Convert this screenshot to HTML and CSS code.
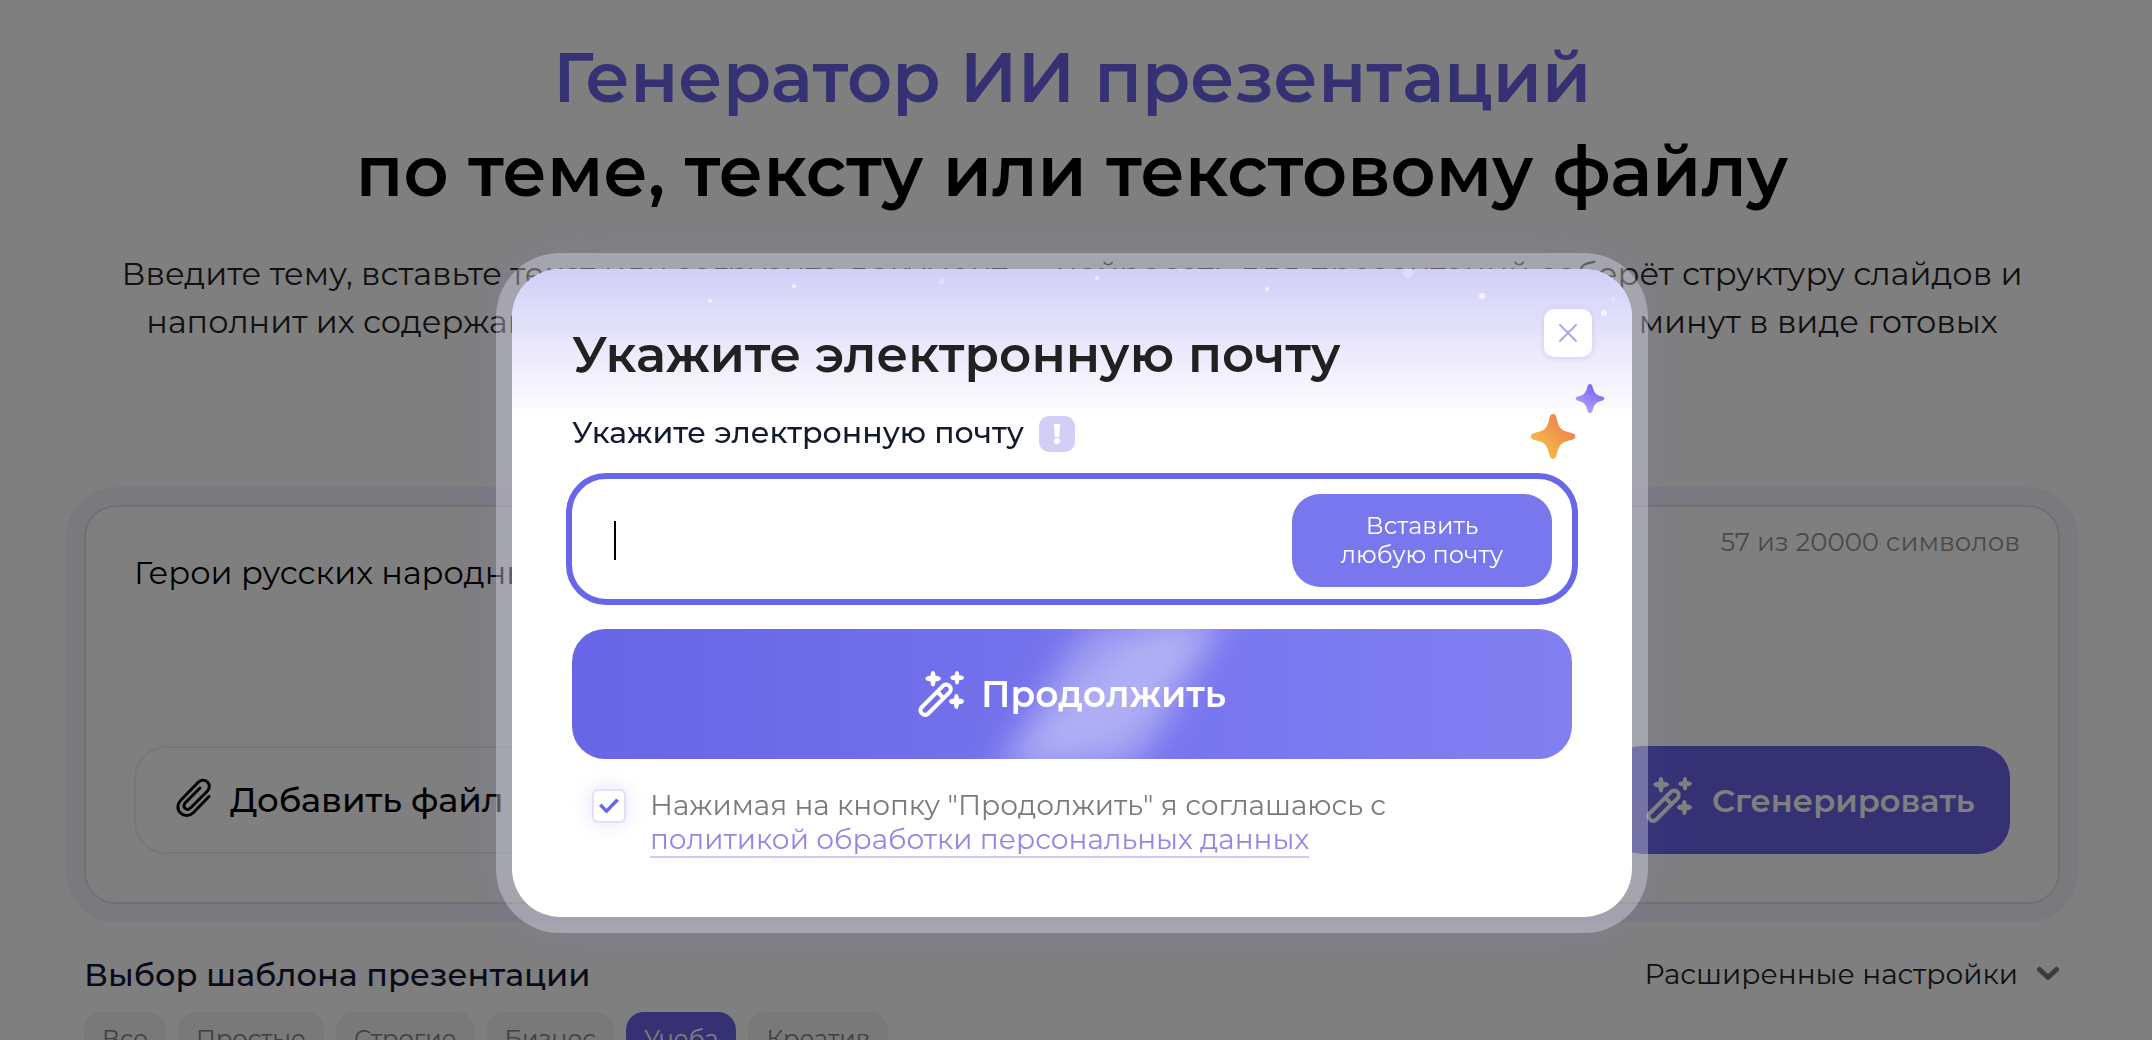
FILE: index.html
```html
<!DOCTYPE html>
<html lang="ru">
<head>
<meta charset="utf-8">
<title>Генератор ИИ презентаций</title>
<meta name="viewport" content="width=device-width, initial-scale=1">
<link rel="stylesheet" href="styles.css">
</head>

<body>
	<svg class="sprite" aria-hidden="true">
		<symbol id="wand" viewBox="0 0 46 46">
			<g fill="none" stroke="currentColor" stroke-width="4" stroke-linejoin="round" stroke-linecap="round">
				<path d="M3.500 36.500 25 14.800a4.600 4.600 0 0 1 6.500 6.500L9.800 43a4.600 4.600 0 0 1-6.300-6.500z"/>
				<path d="M19.500 21l5.500 5.500"/>
			</g>
			<g fill="currentColor">
				<path d="M15 0c1.500 0 2.300 1.400 2.500 4.800C20.900 5 23 6 23 7.600s-2.100 2.600-5.500 2.800C17.300 13.800 16.500 15.400 15 15.400s-2.300-1.600-2.500-5C9.100 10.200 7.400 9.200 7.400 7.600s1.700-2.600 5.100-2.800C12.700 1.400 13.500 0 15 0z"/>
				<path d="M39 0c1.300 0 2 1.300 2.200 4.200C44.200 4.400 46 5.300 46 6.700s-1.800 2.300-4.800 2.500C41 12.100 40.300 13.400 39 13.400s-2-1.300-2.200-4.200c-3-.2-4.400-1.100-4.400-2.500s1.400-2.300 4.400-2.500C37 1.300 37.700 0 39 0z"/>
				<path d="M38.400 23c1.500 0 2.200 1.400 2.400 4.600 3.200.2 5.200 1.200 5.200 2.800s-2 2.600-5.200 2.800C40.600 36.400 39.900 38 38.400 38s-2.200-1.600-2.400-4.800c-3.200-.2-5-1.200-5-2.800s1.800-2.600 5-2.800C36.200 24.400 36.900 23 38.400 23z"/>
			</g>
		</symbol>
	</svg>

	<main class="page">
		<h1 class="title"><span>Генератор ИИ презентаций</span><br>по теме, тексту или текстовому файлу</h1>
		<p class="lead">Введите тему, вставьте текст или загрузите документ — нейросеть для презентаций соберёт структуру слайдов и наполнит их содержанием. Получить готовую презентацию можно уже через несколько минут в виде готовых файлов PPTX и PDF</p>

		<form class="generator">
			<div class="generator-top">
				<textarea class="topic" aria-label="Тема презентации">Герои русских народных сказок и их роль в культуре России</textarea>
				<span class="counter">57 из 20000 символов</span>
			</div>
			<div class="generator-actions">
				<button type="button" class="btn-file">
					<svg width="36" height="42" viewBox="0 0 36 42" fill="none" stroke="currentColor" stroke-width="3" stroke-linecap="round" stroke-linejoin="round"><path d="M33 20.500 17.500 36.500c-4 4-9.500 4-13 .5s-3.500-9 .5-13L22 6.500c3-3 7-3 9.500-.5s2.500 6.500-.5 9.500L14.500 32c-1.800 1.800-4 1.800-5.500.3s-1.500-3.700.3-5.500L24 12"/></svg>
					Добавить файл
				</button>
				<button type="button" class="btn-generate">
					<svg width="46" height="46"><use href="#wand"/></svg>
					Сгенерировать
				</button>
			</div>
		</form>

		<div class="templates-head">
			<h2>Выбор шаблона презентации</h2>
			<button type="button" class="advanced">Расширенные настройки
				<svg width="24" height="16" viewBox="0 0 24 16" fill="none" stroke="#7a7a7a" stroke-width="5" stroke-linecap="round" stroke-linejoin="round"><path d="M3.500 3.500 12 11.500l8.500-8"/></svg>
			</button>
		</div>
		<div class="chips">
			<button type="button">Все</button>
			<button type="button">Простые</button>
			<button type="button">Строгие</button>
			<button type="button">Бизнес</button>
			<button type="button" class="active">Учеба</button>
			<button type="button">Креатив</button>
		</div>
	</main>

	<div class="overlay">
		<section class="modal" role="dialog" aria-labelledby="modal-title">
			<svg class="dots" width="1120" height="150" fill="#fff" aria-hidden="true">
				<g opacity=".7">
					<circle cx="198" cy="32" r="2"/><circle cx="282" cy="17" r="2"/><circle cx="585" cy="9" r="2"/>
					<circle cx="755" cy="20" r="2"/><circle cx="970" cy="27" r="3"/><circle cx="1092" cy="44" r="3"/>
				</g>
				<g opacity=".3">
					<circle cx="430" cy="12" r="3"/><circle cx="669" cy="-1" r="3"/><circle cx="896" cy="4" r="5"/><circle cx="1101" cy="30" r="2"/>
				</g>
			</svg>
			<svg class="stars" width="74" height="76" viewBox="0 0 74 76" aria-hidden="true">
				<defs>
					<linearGradient id="violet" x1=".7" y1=".2" x2=".2" y2="1"><stop stop-color="#7f6cf3"/><stop offset="1" stop-color="#b6a9fa"/></linearGradient>
					<linearGradient id="orange" x1=".8" y1=".2" x2=".2" y2=".8"><stop stop-color="#ee8450"/><stop offset="1" stop-color="#f6b944"/></linearGradient>
				</defs>
				<path fill="url(#violet)" d="M59 0c1.200 0 1.900.8 2.400 2.300 1.200 3.800 1.900 5.700 3.300 7.100s3.200 2.200 6.500 3c1.300.4 2 1.200 2 2.200s-.7 1.700-2 2.100c-3.300.8-5.100 1.600-6.500 3s-2.100 3.300-3.300 7.100c-.5 1.500-1.200 2.300-2.400 2.300s-1.900-.8-2.400-2.300c-1.200-3.800-1.900-5.700-3.300-7.100s-3.200-2.200-6.500-3c-1.300-.4-2-1.100-2-2.100s.7-1.800 2-2.200c3.300-.8 5.100-1.600 6.500-3s2.100-3.300 3.300-7.100C57.100.8 57.800 0 59 0z"/>
				<path fill="url(#orange)" d="M22 30c1.800 0 2.700 1.200 3.300 3.200 1.600 6.400 2.700 9.400 4.600 11.300s4.900 3.100 11.300 4.700c2 .5 3.200 1.500 3.200 3.300s-1.200 2.800-3.200 3.300c-6.400 1.600-9.400 2.800-11.300 4.700s-3 4.900-4.600 11.300c-.6 2-1.500 3.200-3.300 3.200s-2.700-1.200-3.300-3.200c-1.600-6.400-2.700-9.400-4.600-11.300S9.200 57.400 2.800 55.800C.8 55.300 0 54.300 0 52.500s.8-2.800 2.800-3.300c6.400-1.600 9.400-2.800 11.300-4.700s3-4.900 4.600-11.300c.6-2 1.500-3.200 3.300-3.200z"/>
			</svg>
			<button type="button" class="close" aria-label="Закрыть">
				<svg width="20" height="20" viewBox="0 0 20 20" stroke="#aaa6ea" stroke-width="2" stroke-linecap="round"><path d="M2 2l16 16M18 2 2 18"/></svg>
			</button>

			<h2 class="modal-title" id="modal-title">Укажите электронную почту</h2>
			<div class="field-label">
				<label for="email">Укажите электронную почту</label>
				<span class="hint">!</span>
			</div>
			<div class="field">
				<span class="caret"></span>
				<input type="email" id="email">
				<button type="button" class="paste">Вставить<br>любую почту</button>
			</div>
			<button type="button" class="submit">
				<svg width="46" height="46"><use href="#wand"/></svg>
				<span>Продолжить</span>
			</button>
			<div class="agree">
				<input type="checkbox" id="agree" checked>
				<label for="agree">Нажимая на кнопку "Продолжить" я соглашаюсь с<br><a href="#">политикой обработки персональных данных</a></label>
			</div>
		</section>
	</div>
</body>
</html>
```
FILE: styles.css
```css
* { box-sizing: border-box; margin: 0; padding: 0;}
body { font-family: Montserrat, Inter, "Open Sans", sans-serif; background: #fff; color: #000; overflow: hidden; padding-right: 8px;}
button { font-family: inherit; border: 0; background: none; cursor: pointer;}
.sprite { display: none;}

.page { padding: 30px 84px 0;}
.title { font-size: 70px; line-height: 94px; font-weight: 600; text-align: center;}
.title span { color: #6a62e6;}
.lead { margin: 32px auto 0; max-width: 1920px; height: 144px; font-size: 32px; line-height: 48px; color: #222; text-align: center;}

.generator { margin-top: 111px; height: 399px; padding: 16px 48px 48px; display: flex; flex-direction: column; justify-content: space-between; border: 2px solid #e0e0e0; border-radius: 32px; box-shadow: 0 0 0 18px #f5f3fd;}
.generator-top { display: flex; justify-content: space-between;}
.topic { flex: 1; height: 150px; padding-top: 30px; border: 0; resize: none; background: none; font: 32px/40px Montserrat, Inter, sans-serif;}
.counter { margin: 4px -10px 0 0; font-size: 26px; line-height: 30px; color: #949494;}
.generator-actions { display: flex; justify-content: space-between;}
.btn-file, .btn-generate { display: flex; align-items: center; height: 108px; border-radius: 32px; font-size: 34px;}
.btn-file { width: 480px; padding-left: 40px; gap: 18px; border: 2px solid #eee; font-weight: 500;}
.btn-file svg { margin-bottom: 6px;}
.btn-generate { width: 400px; padding-left: 36px; gap: 20px; background: #6a62e6; color: #fff; font-size: 32px; font-weight: 600;}

.templates-head { display: flex; justify-content: space-between; align-items: center; margin-top: 50px; height: 40px;}
.templates-head h2 { font-size: 32px; font-weight: 500; color: #121735;}
.advanced { display: flex; align-items: center; gap: 18px; font-size: 28px; color: #222;}
.chips { display: flex; gap: 12px; margin-top: 18px;}
.chips button { height: 52px; padding: 0 18px; border-radius: 18px; background: #f2f2f2; font-size: 24px; color: #808080;}
.chips .active { background: #6a62e6; color: #fff;}

.overlay { position: fixed; inset: 0; padding: 253px 8px 0 0; background: rgba(0,0,0,.5);}
.modal { position: relative; width: 1152px; height: 680px; margin: 0 auto; padding: 56px 60px; border: 16px solid rgba(233,233,255,.36); border-radius: 64px; background: linear-gradient(#d0cff8, #e9e7fb 50%, #fff) 0 0 / 100% 150px no-repeat padding-box, #fff padding-box; box-shadow: 0 0 60px rgba(124,120,240,.12);}
.dots { position: absolute; left: 0; top: 0; border-radius: 48px 48px 0 0;}
.stars { position: absolute; right: 27px; top: 115px;}
.close { position: absolute; right: 40px; top: 40px; width: 48px; height: 48px; display: flex; align-items: center; justify-content: center; border-radius: 10px; background: #fff; box-shadow: 0 2px 6px rgba(80,70,180,.15);}
.modal-title { font-size: 50px; line-height: 60px; font-weight: 600; color: #212121;}
.field-label { display: flex; align-items: center; gap: 15px; margin-top: 31px; height: 36px; font-size: 30px; font-weight: 500; color: #121a30;}
.field-label label { margin-bottom: 4px;}
.hint { width: 36px; height: 36px; border-radius: 10px; background: #d0cff8; color: #fff; font-size: 28px; line-height: 36px; font-weight: 800; text-align: center;}
.field { display: flex; align-items: center; height: 132px; margin: 21px -6px 0; padding: 2px 20px 0 42px; border: 6px solid #6866e9; border-radius: 40px; background: #fff;}
.caret { width: 2px; height: 39px; background: #000;}
.field input { flex: 1; min-width: 0; height: 80px; border: 0; outline: 0; background: none; font: 32px Montserrat, Inter, sans-serif;}
.paste { width: 260px; height: 93px; border-radius: 28px; background: #7977ee; color: #fff; font-size: 24px; line-height: 29px;}
.submit { position: relative; overflow: hidden; display: flex; align-items: center; justify-content: center; gap: 17px; width: 100%; height: 130px; margin-top: 24px; border-radius: 33px; background: linear-gradient(90deg, #6865e6, #7a78ef 70%, #8280f0); color: #fff; font-size: 36px; font-weight: 600;}
/* shine */
.submit::before { content: ""; position: absolute; left: 47%; top: -10px; width: 138px; height: 150px; background: linear-gradient(115deg, rgba(255,255,255,.2), rgba(255,255,255,.45) 50%, rgba(255,255,255,.3)); transform: skewX(-30deg); filter: blur(18px);}
.submit svg, .submit span { position: relative;}

.agree { display: flex; margin-top: 29px; padding-left: 20px; gap: 24px; font-size: 28px; line-height: 34px; color: #7a7a7a;}
.agree input { appearance: none; flex: none; width: 34px; height: 34px; margin-top: 1px; border: 2px solid #e2dffb; border-radius: 6px; background: #fff; box-shadow: 0 0 20px rgba(104,102,233,.2); display: grid; place-items: center;}
.agree input:checked::before { content: ""; width: 20px; height: 15px; background: #6866e9; clip-path: polygon(0 50%, 13% 33%, 37% 68%, 86% 0, 100% 15%, 38% 100%);}
.agree a { color: #9287e3; text-decoration: none; border-bottom: 2px solid #cdc9f4;}
```
